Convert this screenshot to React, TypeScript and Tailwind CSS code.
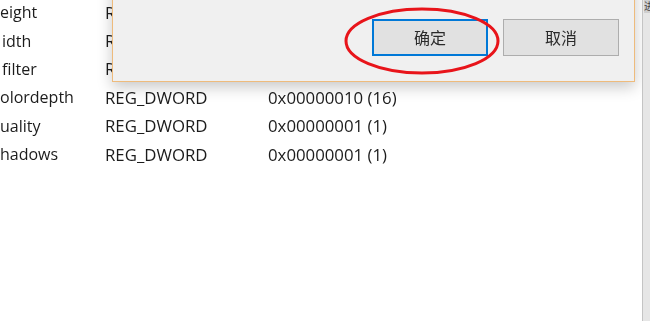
const rows = [
  { name: 'eight', indent: 'pl-0', type: 'REG_DWORD', data: '0x00000010 (16)' },
  { name: 'idth', indent: 'pl-[2px]', type: 'REG_DWORD', data: '0x00000010 (16)' },
  { name: 'filter', indent: 'pl-[2px]', type: 'REG_DWORD', data: '0x00000010 (16)' },
  { name: 'olordepth', indent: 'pl-0', type: 'REG_DWORD', data: '0x00000010 (16)' },
  { name: 'uality', indent: 'pl-0', type: 'REG_DWORD', data: '0x00000001 (1)' },
  { name: 'hadows', indent: 'pl-0', type: 'REG_DWORD', data: '0x00000001 (1)' },
]

export default function App() {
  return (
    <div className="w-[650px] h-[321px] overflow-hidden bg-white flex font-['Open_Sans','Noto_Sans_CJK_SC',sans-serif]">
      {/* Registry value list */}
      <div className="relative flex-1 h-full">
        <div className="mt-[-2px] text-[16px] text-[#1c1c1c] blur-[0.3px]">
          {rows.map((r) => (
            <div key={r.name} className="flex items-center h-[28.4px] whitespace-nowrap">
              <div className={`w-[105px] ${r.indent}`}>{r.name}</div>
              <div className="w-[163px] text-[16.8px]">{r.type}</div>
              <div className="text-[16.8px]">{r.data}</div>
            </div>
          ))}
        </div>

        {/* Dialog window */}
        <div className="absolute left-[112px] top-[-20px] w-[523px] h-[102px] bg-[#f0f0f0] border-[1.5px] border-[#eebb7c] shadow-[0_5px_14px_rgba(0,0,0,0.22)] flex items-end justify-end gap-[15px] pr-[15px] pb-[25px]">
          <button className="w-[116px] h-[37px] bg-[#e1e1e1] border-2 border-[#0078d7] text-[16px] text-[#2a2a2a] blur-[0.3px]">
            确定
          </button>
          <button className="w-[116px] h-[37px] bg-[#e1e1e1] border-[1.5px] border-[#adadad] text-[16px] text-[#2a2a2a] blur-[0.3px]">
            取消
          </button>
        </div>

        {/* Red annotation ellipse */}
        <svg className="absolute left-[340px] top-0" width="170" height="85" viewBox="0 0 170 85">
          <ellipse cx="82" cy="41" rx="76" ry="32" fill="none" stroke="#e8141a" strokeWidth="3" />
        </svg>
      </div>

      {/* Right edge scrollbar strip */}
      <div className="w-[8px] h-full bg-[#e6e6e6] border-l border-[#c4c4c4] relative overflow-hidden">
        <div className="absolute left-[1px] top-0 h-[13px] w-[12px] bg-[#cfcfcf] text-[10px] leading-[13px] text-[#444]">进</div>
      </div>
    </div>
  )
}
